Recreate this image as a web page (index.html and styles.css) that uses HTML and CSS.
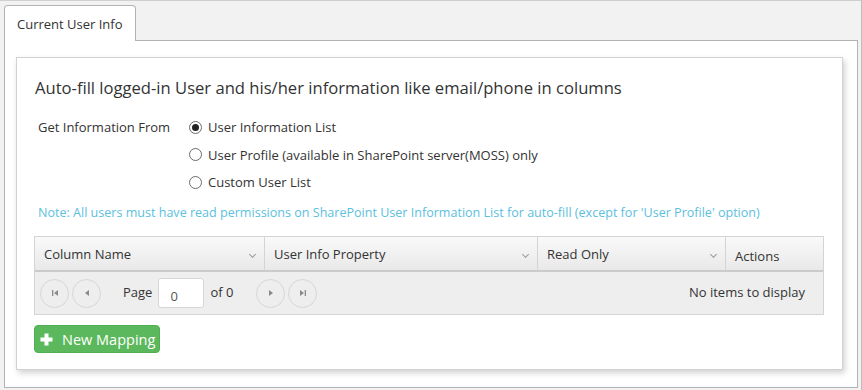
FILE: index.html
```html
<!DOCTYPE html>
<html>
<head>
<meta charset="utf-8">
<link rel="stylesheet" href="styles.css">
</head>
<body>
<div class="frame">
  <div class="tabstrip">
    <div class="tab">Current User Info</div>
  </div>
  <div class="panel">
    <div class="card">
      <h1 class="title">Auto-fill logged-in User and his/her information like email/phone in columns</h1>
      <div class="source">
        <div class="source-label">Get Information From</div>
        <div class="options">
          <label class="opt"><span class="radio checked"></span>User Information List</label>
          <label class="opt"><span class="radio"></span>User Profile (available in SharePoint server(MOSS) only</label>
          <label class="opt"><span class="radio"></span>Custom User List</label>
        </div>
      </div>
      <div class="note">Note: All users must have read permissions on SharePoint User Information List for auto-fill (except for 'User Profile' option)</div>
      <div class="grid">
        <div class="ghead">
          <div class="th c1">Column Name<span class="chev"></span></div>
          <div class="th c2">User Info Property<span class="chev"></span></div>
          <div class="th c3">Read Only<span class="chev"></span></div>
          <div class="th c4 act">Actions</div>
        </div>
        <div class="pager">
          <div class="pbtn"><svg width="8" height="8" viewBox="0 0 8 8"><rect x="1" y="1" width="1.3" height="6" fill="#8a8a8a"/><path d="M7 1 L3 4 L7 7 Z" fill="#8a8a8a"/></svg></div>
          <div class="pbtn"><svg width="8" height="8" viewBox="0 0 8 8"><path d="M6 1 L2 4 L6 7 Z" fill="#8a8a8a"/></svg></div>
          <span class="plabel">Page</span>
          <div class="pinput">0</div>
          <span class="pof">of 0</span>
          <div class="pbtn next"><svg width="8" height="8" viewBox="0 0 8 8"><path d="M2 1 L6 4 L2 7 Z" fill="#8a8a8a"/></svg></div>
          <div class="pbtn"><svg width="8" height="8" viewBox="0 0 8 8"><path d="M1 1 L5 4 L1 7 Z" fill="#8a8a8a"/><rect x="5.7" y="1" width="1.3" height="6" fill="#8a8a8a"/></svg></div>
          <span class="pinfo">No items to display</span>
        </div>
      </div>
      <button class="newbtn"><svg width="13" height="13" viewBox="0 0 13 13"><path d="M4.5 0.5 H8.5 V4.5 H12.5 V8.5 H8.5 V12.5 H4.5 V8.5 H0.5 V4.5 H4.5 Z" fill="#fff"/></svg><span>New Mapping</span></button>
    </div>
  </div>
</div>
</body>
</html>
```

FILE: styles.css
```css
* { box-sizing: border-box; }
html, body { margin: 0; padding: 0; }
body {
  font-family: "Open Sans", "Noto Sans", sans-serif;
  color: #333;
  background: #f2f2f2;
  width: 862px;
  height: 390px;
  overflow: hidden;
}
.frame {
  width: 862px;
  height: 390px;
  border-top: 1px solid #cfcfcf;
  border-right: 1px solid #bdbdbd;
  background: #f2f2f2;
  padding: 4px 0 0 4px;
}
.tabstrip {
  display: flex;
  height: 35px;
}
.tab {
  width: 132px;
  height: 36px;
  border: 1px solid #b3b3b3;
  border-bottom: none;
  border-radius: 4px 4px 0 0;
  background: #fff;
  font-size: 13px;
  padding: 9px 0 0 12px;
  position: relative;
  z-index: 1;
  color: #333;
}
.panel {
  width: 854px;
  height: 348px;
  border: 1px solid #b3b3b3;
  background: #fff;
  padding: 16px 14px 0 11px;
}
.card {
  width: 827px;
  height: 313px;
  border: 1px solid #d2d2d2;
  box-shadow: 2px 3px 6px rgba(0,0,0,0.18);
  background: #fff;
  padding: 18px 18px 0 17px;
}
.title {
  margin: 0 0 0 1px;
  font-size: 16.6px;
  font-weight: normal;
  line-height: 24px;
  color: #333;
}
.source {
  display: flex;
  margin-top: 18px;
  margin-left: 4px;
  font-size: 13px;
}
.source-label {
  width: 151px;
  line-height: 18px;
}
.options {
  display: flex;
  flex-direction: column;
  gap: 9.5px;
}
.opt {
  display: flex;
  align-items: center;
  line-height: 18px;
}
.radio {
  width: 13px;
  height: 13px;
  border: 1px solid #6b6b6b;
  border-radius: 50%;
  margin-right: 6px;
  display: flex;
  align-items: center;
  justify-content: center;
  background: #fff;
}
.radio.checked::after {
  content: "";
  width: 7px;
  height: 7px;
  border-radius: 50%;
  background: #222;
}
.note {
  margin: 14px 0 0 4px;
  font-size: 12.55px;
  color: #5bc0de;
  line-height: 16px;
}
.grid {
  margin-top: 15px;
  width: 790px;
  border: 1px solid #d4d4d4;
}
.ghead {
  display: flex;
  height: 35px;
  background: linear-gradient(#f9f9f9, #e9e9e9);
  border-bottom: 2px solid #cbcbcb;
}
.th {
  position: relative;
  font-size: 13px;
  padding: 8px 0 0 9px;
  border-right: 1px solid #d4d4d4;
  line-height: 18px;
}
.c1 { width: 230px; }
.c2 { width: 273px; }
.c3 { width: 188px; }
.c4 { flex: 1; border-right: none; padding-top: 10px; }
.chev {
  position: absolute;
  right: 9px;
  top: 15px;
  width: 5px;
  height: 5px;
  border-right: 1px solid #9a9a9a;
  border-bottom: 1px solid #9a9a9a;
  transform: rotate(45deg);
}
.pager {
  display: flex;
  align-items: center;
  height: 42px;
  background: #eeeeee;
  padding: 0 0 0 5px;
  font-size: 13px;
}
.pbtn {
  width: 29px;
  height: 29px;
  border: 1px solid #d6d6d6;
  border-radius: 50%;
  display: flex;
  align-items: center;
  justify-content: center;
  margin-right: 3px;
}
.plabel { margin-left: 19px; margin-top: -2px; }
.pinput {
  width: 46px;
  height: 30px;
  margin-left: 6px;
  border: 1px solid #d6d6d6;
  border-radius: 3px;
  background: #fff;
  padding: 9px 0 0 11px;
  font-size: 13px;
  color: #555;
  line-height: 16px;
}
.pof { margin-left: 6px; margin-top: -2px; }
.pbtn.next { margin-left: 23px; }
.pinfo { margin-left: auto; margin-right: 18px; margin-top: -2px; }
.newbtn {
  margin-top: 10px;
  display: flex;
  align-items: center;
  width: 126px;
  height: 28px;
  background: #5cb85c;
  border: 1px solid #4fae4f;
  border-radius: 4px;
  color: #fff;
  font-family: "Open Sans", "Noto Sans", sans-serif;
  font-size: 14.5px;
  padding: 0 0 0 5px;
}
.newbtn svg { margin-right: 9px; }
```
